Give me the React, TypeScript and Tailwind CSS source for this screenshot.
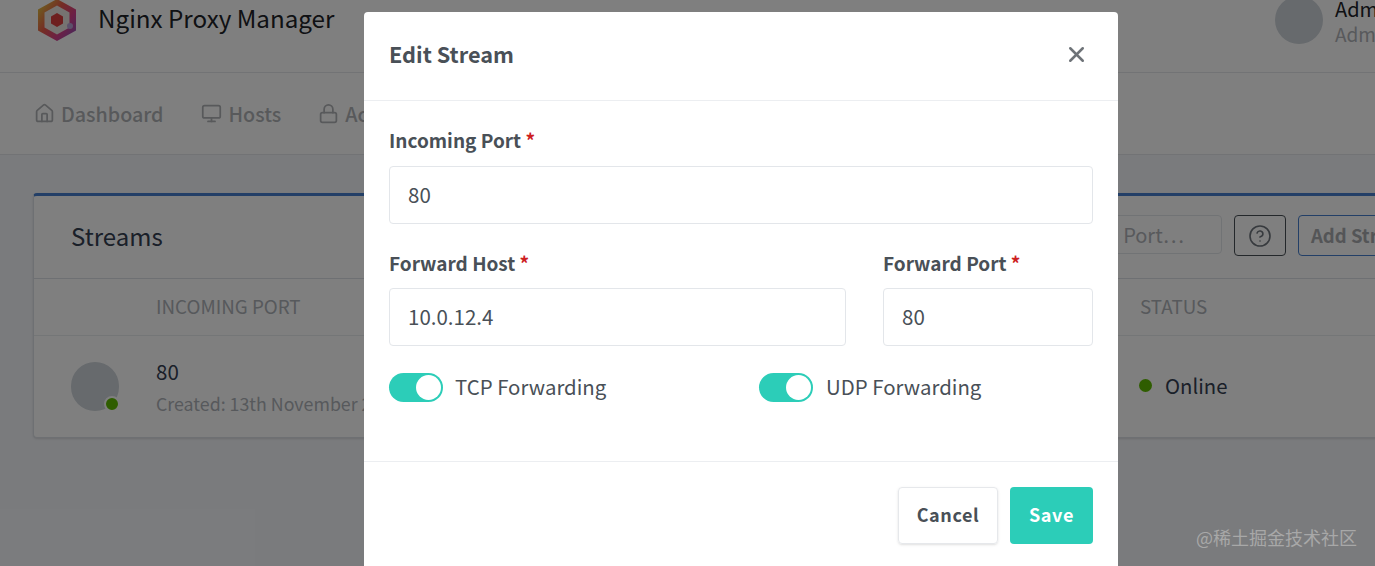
import { Home, Monitor, Lock, X, HelpCircle } from "lucide-react";

const Logo = () => (
  <svg width="40" height="42" viewBox="0 0 40 42" className="shrink-0">
    <defs>
      <linearGradient id="g" x1="0" y1="0.1" x2="1" y2="0.9">
        <stop offset="0" stopColor="#dccb3c" />
        <stop offset="0.4" stopColor="#ea5a4a" />
        <stop offset="0.7" stopColor="#d83f8c" />
        <stop offset="1" stopColor="#8a55b8" />
      </linearGradient>
    </defs>
    <path d="M20 0 39 10.5v21L20 42 1 31.5v-21z" fill="url(#g)" />
    <path d="M20 6.5 32.5 13.5v15L20 35.5 7.500 28.500v-15z" fill="#ece6e2" />
    <path d="M20 14 26 17.500v7L20 28l-6-3.500v-7z" fill="#dc3f3f" />
    <circle cx="33" cy="27" r="3" fill="#b9a3d6" />
  </svg>
);

const Toggle = () => (
  <span className="flex h-[29px] w-[54px] shrink-0 items-center justify-end rounded-full bg-[#2ccdb8] pr-[2px]">
    <span className="h-[25px] w-[25px] rounded-full bg-white" />
  </span>
);

const Field = ({
  label,
  value,
  className,
  labelClassName,
}: {
  label: string;
  value: string;
  className: string;
  labelClassName: string;
}) => (
  <div className={className}>
    <div className={`mb-[12px] h-[27px] text-[19px] font-semibold text-[#495057] ${labelClassName}`}>
      {label} <span className="text-[#cd201f]">*</span>
    </div>
    <div className="flex h-[58px] items-center rounded-[4px] border border-[#e3e6ea] bg-white pb-[2px] pl-[18px] text-[20.500px] text-[#495057]">
      {value}
    </div>
  </div>
);

const Background = () => (
  <div className="h-[566px] w-[1440px] bg-[#f5f7fb] text-[#354052]">
    <header className="flex h-[73px] items-start justify-between border-b border-[#e5e7ea] bg-white pl-[37px]">
      <div className="-mt-[1px] flex items-start gap-[21px]">
        <Logo />
        <span className="text-[24.200px] leading-[38px] text-[#202328]">Nginx Proxy Manager</span>
      </div>
      <div className="-mt-[4px] flex w-[165px] items-start gap-[12px]">
        <div className="h-[48px] w-[48px] shrink-0 rounded-full bg-[#ced4da]" />
        <div>
          <div className="text-[20px] leading-[26px] text-[#202328]">Administrator</div>
          <div className="text-[19px] leading-[24px] text-[#b0b3b8]">Administrator</div>
        </div>
      </div>
    </header>
    <nav className="flex h-[82px] items-center gap-[37px] border-b border-[#e5e7ea] bg-white pl-[34px] text-[19.700px] font-medium text-[#b0b3b6]">
      <span className="flex items-center gap-[6px]"><Home size={21} strokeWidth={2} />Dashboard</span>
      <span className="flex items-center gap-[7px]"><Monitor size={21} strokeWidth={2} />Hosts</span>
      <span className="flex items-center gap-[6px]"><Lock size={21} strokeWidth={2} />Access</span>
    </nav>
    <section className="mt-[38px] ml-[33px] w-[1405px] rounded-[4px] border border-t-[3px] border-[#dde1e6] border-t-[#467fcf] bg-white shadow-sm">
      <div className="flex h-[83px] items-center justify-between border-b border-[#dde1e6] pr-[14px] pl-[37px]">
        <span className="pb-[2px] text-[24px] text-[#354052]">Streams</span>
        <div className="-mt-[3px] flex items-start gap-[12px]">
          <div className="flex h-[39px] w-[200px] items-center justify-end rounded-[4px] border border-[#e3e6ea] pr-[37px] text-[20px] text-[#b0b3b8]">Search Port…</div>
          <div className="flex h-[41px] w-[52px] items-center justify-center rounded-[4px] border border-[#495057] text-[#6e757c]"><HelpCircle size={24} strokeWidth={1.6} /></div>
          <div className="flex h-[41px] w-[125px] items-center rounded-[4px] border border-[#467fcf] pl-[12px] text-[18.500px] font-bold text-[#a8abae]">Add Stream</div>
        </div>
      </div>
      <div className="flex h-[57px] items-center border-b border-[#e9ecef] pb-[2px] pl-[122px] text-[18.800px] text-[#aeb2b8]">
        <span className="w-[984px]">INCOMING PORT</span>
        <span>STATUS</span>
      </div>
      <div className="flex h-[101px] items-center pl-[37px]">
        <div className="relative h-[49px] w-[48px] shrink-0 rounded-full bg-[#ced4da]">
          <span className="absolute -right-[1px] -bottom-[1px] h-[16px] w-[16px] rounded-full border-[2px] border-white bg-[#5eba00]" />
        </div>
        <div className="ml-[37px] w-[983px]">
          <div className="text-[20.500px] leading-[32px] text-[#354052]">80</div>
          <div className="text-[17.800px] leading-[32px] text-[#aeb2b8]">Created: 13th November 2021</div>
        </div>
        <span className="flex items-center gap-[13px] pb-[2px] text-[20.300px] text-[#354052]">
          <span className="h-[13px] w-[13px] rounded-full bg-[#5eba00]" />Online
        </span>
      </div>
    </section>
  </div>
);

const Modal = () => (
  <div className="absolute top-[12px] left-[364px] w-[754px] rounded-t-[4px] bg-white">
    <div className="flex h-[89px] items-center justify-between border-b border-[#eceef1] pr-[29px] pb-[3px] pl-[25px]">
      <h2 className="text-[21.700px] font-semibold text-[#495057]">Edit Stream</h2>
      <X size={25} strokeWidth={2.4} className="text-[#6e7378]" />
    </div>
    <div className="h-[360px] px-[25px] pt-[26px]">
      <Field label="Incoming Port" value="80" className="mb-[25px]" labelClassName="leading-[25px]" />
      <div className="flex gap-[37px]">
        <Field label="Forward Host" value="10.0.12.4" className="w-[457px]" labelClassName="leading-[28px]" />
        <Field label="Forward Port" value="80" className="w-[210px]" labelClassName="leading-[28px]" />
      </div>
      <div className="mt-[25px] flex text-[20.400px] text-[#495057]">
        <div className="flex w-[370px] items-center gap-[12px]"><Toggle /><span className="pb-[2px]">TCP Forwarding</span></div>
        <div className="flex items-center gap-[13px]"><Toggle /><span className="pb-[2px]">UDP Forwarding</span></div>
      </div>
    </div>
    <div className="flex h-[120px] items-start justify-end gap-[12px] border-t border-[#eceef1] pt-[25px] pr-[25px]">
      <div className="flex h-[57px] w-[100px] items-center justify-center rounded-[4px] border border-[#e6e8eb] pb-[2px] text-[18px] font-bold tracking-[0.600px] text-[#495057] shadow-sm">Cancel</div>
      <div className="flex h-[57px] w-[83px] items-center justify-center rounded-[4px] bg-[#2ccdb8] pb-[2px] text-[18px] font-bold tracking-[0.600px] text-white">Save</div>
    </div>
  </div>
);

export default function App() {
  return (
    <div
      className="relative h-[566px] w-[1375px] overflow-hidden"
      style={{ fontFamily: '"Noto Sans CJK SC", "Noto Sans", sans-serif' }}
    >
      <Background />
      <div className="absolute inset-0 bg-black/50" />
      <Modal />
      <div className="absolute top-[524px] left-[1196px] text-[18px] leading-[26px] text-[#a8a8a8]">@稀土掘金技术社区</div>
    </div>
  );
}
